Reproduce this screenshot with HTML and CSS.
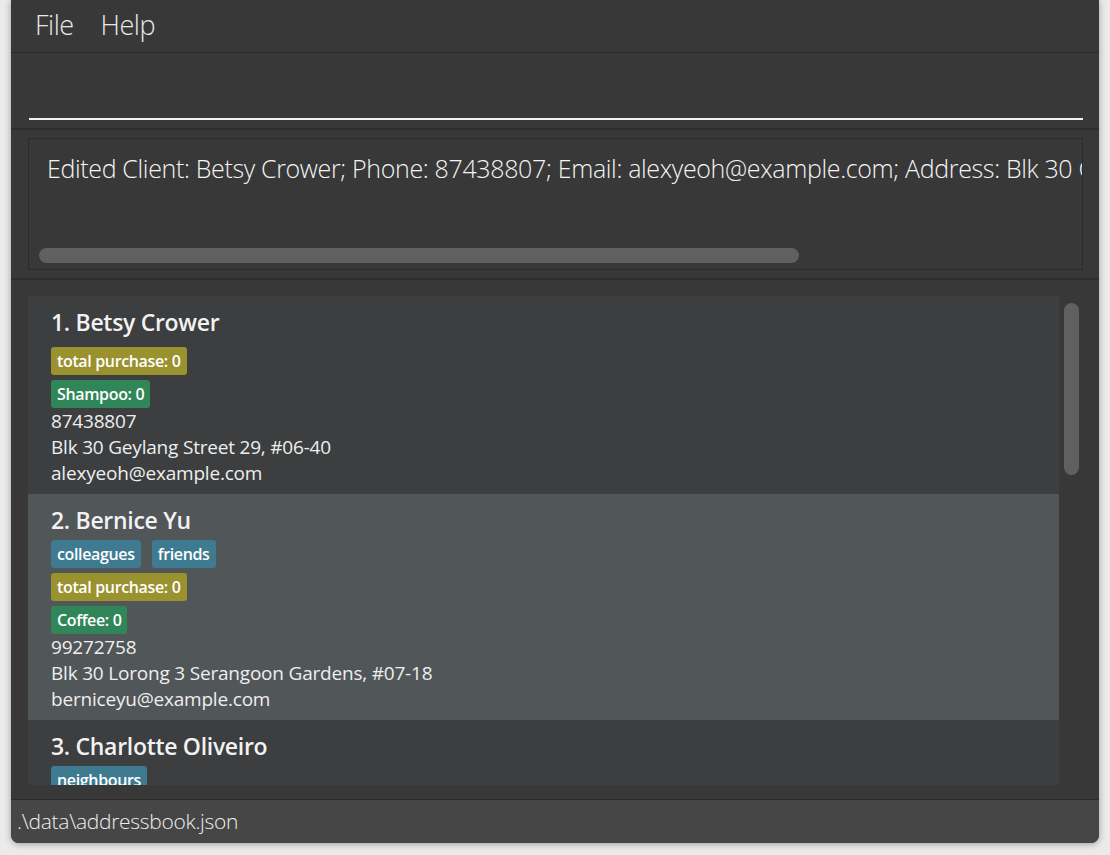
FILE: index.html
```html
<!DOCTYPE html>
<html>
<head>
<meta charset="utf-8">
<title>Address App</title>
<link rel="stylesheet" href="styles.css">
</head>
<body>
<div class="window">
  <div class="menubar">
    <span class="menu-item">File</span>
    <span class="menu-item">Help</span>
  </div>
  <div class="command">
    <div class="command-field"></div>
  </div>
  <div class="result">
    <div class="result-box">
      <div class="result-text">Edited Client: Betsy Crower; Phone: 87438807; Email: alexyeoh@example.com; Address: Blk 30 Geylang Street 29, #06-40; Tags: </div>
      <div class="hscroll"></div>
    </div>
  </div>
  <div class="list">
    <div class="viewport">
      <div class="card even">
        <div class="name">1. Betsy Crower</div>
        <div class="groups">
          <div class="tagrow"></div>
          <div class="tagrow"><span class="tag olive">total purchase: 0</span></div>
          <div class="tagrow"><span class="tag green">Shampoo: 0</span></div>
        </div>
        <div class="info">87438807</div>
        <div class="info">Blk 30 Geylang Street 29, #06-40</div>
        <div class="info">alexyeoh@example.com</div>
      </div>
      <div class="card odd">
        <div class="name">2. Bernice Yu</div>
        <div class="groups">
          <div class="tagrow"><span class="tag blue">colleagues</span><span class="tag blue">friends</span></div>
          <div class="tagrow"><span class="tag olive">total purchase: 0</span></div>
          <div class="tagrow"><span class="tag green">Coffee: 0</span></div>
        </div>
        <div class="info">99272758</div>
        <div class="info">Blk 30 Lorong 3 Serangoon Gardens, #07-18</div>
        <div class="info">berniceyu@example.com</div>
      </div>
      <div class="card even">
        <div class="name">3. Charlotte Oliveiro</div>
        <div class="groups">
          <div class="tagrow"><span class="tag blue">neighbours</span></div>
        </div>
      </div>
    </div>
    <div class="vtrack"><div class="vthumb"></div></div>
  </div>
  <div class="status">.\data\addressbook.json</div>
</div>
</body>
</html>
```
FILE: styles.css
```css
html, body {
  margin: 0;
  padding: 0;
}
body {
  background: #ebebeb;
  width: 1110px;
  height: 855px;
  overflow: hidden;
  font-family: "Open Sans", "Noto Sans", sans-serif;
  color: #ffffff;
}
.window {
  margin-left: 11px;
  width: 1088px;
  height: 843px;
  background: #383838;
  border-radius: 0 0 8px 8px;
  box-shadow: 0 1px 7px rgba(0, 0, 0, 0.35);
  display: flex;
  flex-direction: column;
  overflow: hidden;
}
.menubar {
  height: 52px;
  border-bottom: 1px solid #2b2b2b;
  display: flex;
  gap: 27px;
  padding-left: 24px;
  flex-shrink: 0;
}
.menu-item {
  font-size: 27px;
  font-weight: 300;
  letter-spacing: -0.5px;
  line-height: 50px;
  color: #e8e8e8;
}
.command {
  height: 77px;
  border-bottom: 2px solid #2d2d2d;
  padding: 10px 16px 0 18px;
  box-sizing: border-box;
  flex-shrink: 0;
}
.command-field {
  height: 55px;
  border-bottom: 2px solid #f2f2f2;
}
.result {
  height: 150px;
  border-bottom: 2px solid #2d2d2d;
  padding: 8px 16px 8px 17px;
  box-sizing: border-box;
  flex-shrink: 0;
}
.result-box {
  height: 132px;
  box-sizing: border-box;
  border: 1px solid #2b2b2b;
  display: flex;
  flex-direction: column;
  justify-content: space-between;
  overflow: hidden;
}
.result-text {
  padding: 11px 0 0 18px;
  font-size: 25px;
  font-weight: 300;
  letter-spacing: -0.35px;
  line-height: 36px;
  white-space: nowrap;
  color: #f4f4f4;
}
.hscroll {
  width: 760px;
  height: 15px;
  margin: 0 0 6px 10px;
  border-radius: 8px;
  background: #606060;
  flex-shrink: 0;
}
.list {
  height: 520px;
  border-bottom: 1px solid #2b2b2b;
  padding: 16px 0 14px 17px;
  box-sizing: border-box;
  display: flex;
  flex-shrink: 0;
}
.viewport {
  width: 1031px;
  overflow: hidden;
  flex-shrink: 0;
}
.vtrack {
  flex: 1;
  padding: 7px 0 0 5px;
}
.vthumb {
  width: 15px;
  height: 172px;
  border-radius: 8px;
  background: #606060;
}
.card {
  padding: 10px 0 8px 23px;
  display: flex;
  flex-direction: column;
}
.card.even {
  background: #3c3e3f;
}
.card.odd {
  background: #515658;
}
.name {
  font-size: 23px;
  font-weight: 600;
  letter-spacing: -0.3px;
  line-height: 32px;
  color: #f2f2f2;
}
.groups {
  margin-top: 4px;
  display: flex;
  flex-direction: column;
  gap: 5px;
}
.tagrow {
  display: flex;
  flex-wrap: wrap;
  gap: 11px;
}
.tag {
  height: 28px;
  line-height: 28px;
  padding: 0 6px;
  border-radius: 3px;
  font-size: 16px;
  font-weight: 600;
  letter-spacing: -0.35px;
  color: #ffffff;
}
.tag.olive {
  background: #9a912f;
}
.tag.green {
  background: #318659;
}
.tag.blue {
  background: #3e7b91;
}
.info {
  font-size: 19px;
  letter-spacing: -0.2px;
  line-height: 26px;
  color: #eeeeee;
}
.status {
  height: 43px;
  background: #464646;
  padding-left: 6px;
  font-size: 21px;
  font-weight: 300;
  letter-spacing: -0.3px;
  line-height: 43px;
  color: #eeeeee;
  flex-shrink: 0;
}
```
